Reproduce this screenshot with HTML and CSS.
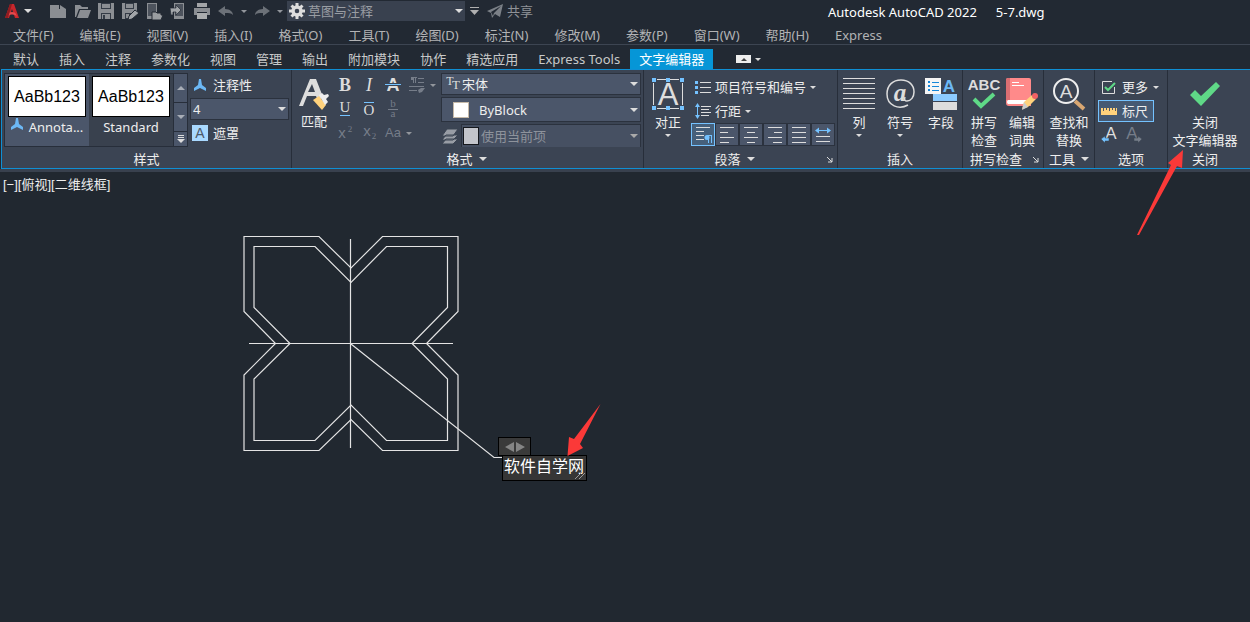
FILE: index.html
```html
<!DOCTYPE html>
<html lang="zh-CN">
<head>
<meta charset="utf-8">
<title>Autodesk AutoCAD 2022 5-7.dwg</title>
<link rel="stylesheet" href="styles.css">
</head>
<body>
<header class="titlebar">
  <button class="app-menu" aria-label="应用程序菜单">
    <svg width="16" height="18" viewBox="0 0 16 18"><path d="M1 16 6 2h4l5 14h-4l-3-9-3 9z" fill="#c8272c"/><path d="M4 11c4-2 7-1 8 1l1 3c-2-3-6-3-9-1z" fill="#e34a4d"/><path d="M1 16 6 2h2L4 16z" fill="#8f1c20"/></svg>
    <i class="caret light"></i>
  </button>
  <div class="quick">
    <button aria-label="新建"><svg width="18" height="18"><path d="M1 3h9v4h7v9H1zM11 3l6 4h-6z" fill="#8b8e93"/></svg></button>
    <button aria-label="打开"><svg width="18" height="18"><path d="M2 15V3h5l2 2h6v2H6L3 15zM7 8h11l-3 8H4z" fill="#8b8e93"/></svg></button>
    <button aria-label="保存"><svg width="18" height="18"><path d="M1 1h16v16H1z" fill="#8b8e93"/><path d="M4 1h10v6H4zM4 11h10v6H4z" fill="#343b46"/><path d="M5 2h8v4H5zM5 12h8v5H5z" fill="#8b8e93"/><path d="M6 13h2v4H6z" fill="#343b46"/></svg></button>
    <button aria-label="另存为"><svg width="18" height="18"><path d="M1 1h15v8l-8 8H1z" fill="#8b8e93"/><path d="M4 1h9v6H4zM4 11h8v2l-4 4H4z" fill="#343b46"/><path d="M5 2h7v4H5zM5 12h3v4H5z" fill="#8b8e93"/><path d="m7 18 1-4 6-6 4 3-7 6z" fill="#a2a5a9" stroke="#222933"/></svg></button>
    <button aria-label="从移动设备打开"><svg width="18" height="18"><path d="M2 1h10v16H2z" fill="#8b8e93"/><path d="M3 2h8v12H3z" fill="#4d535d"/><path d="M7 17v-7h4l1 1h4v2h2l-2 5H7z" fill="#9a9da1" stroke="#222933"/></svg></button>
    <button aria-label="保存到移动设备"><svg width="18" height="18"><path d="M5 1h10v16H5V9H3V6h2z" fill="#8b8e93"/><path d="M6 2h8v12H6z" fill="#4d535d"/><path d="M1 6h6V3l5 5-5 5v-3H4v3H2z" fill="#a2a5a9" stroke="#222933" stroke-width=".7"/></svg></button>
    <button aria-label="打印"><svg width="18" height="18"><path d="M4 1h10v4H4z" fill="#a3a5a8"/><path d="M1 6h16v7h-3v-3H4v3H1z" fill="#8b8e93"/><path d="M4 11h10v6H4z" fill="#aaacae"/></svg></button>
    <button aria-label="放弃"><svg width="18" height="18"><path d="m1 9 7-5v3c5 0 8 3 8 6-2-2-4-2-8-2v3z" fill="#6c7178"/></svg></button>
    <i class="caret dim"></i>
    <button aria-label="重做"><svg width="18" height="18"><path d="m17 9-7-5v3c-5 0-8 3-8 6 2-2 4-2 8-2v3z" fill="#6c7178"/></svg></button>
    <i class="caret dim"></i>
  </div>
  <div class="combo workspace">
    <svg width="16" height="16" viewBox="-8 -8 16 16"><circle r="4" fill="none" stroke="#ddd" stroke-width="3.4"/><path d="M0-8V-4M0 8V4M-8 0h4M8 0H4M-5.500-5.500l3 3M5.500 5.500l-3-3M-5.500 5.500l3-3M5.500-5.500l-3 3" stroke="#ddd" stroke-width="3"/></svg>
    <select aria-label="工作空间"><option>草图与注释</option></select>
  </div>
  <button class="customize" aria-label="自定义快速访问工具栏"><svg width="10" height="8"><path d="M0 .5h9" stroke="#b0b0b0"/><path d="M0 3h9L4.500 8z" fill="#b0b0b0"/></svg></button>
  <button class="share"><svg width="16" height="16"><path d="M0 8 16 1l-3 13-5-3-3 4-1-5zM4 9l2 4 1-3 7-7z" fill="#7b8087" fill-rule="evenodd"/></svg>共享</button>
  <h1 class="doc-title"><span>Autodesk AutoCAD 2022</span><span>5-7.dwg</span></h1>
</header>
<nav class="menubar" aria-label="菜单栏">
  <a href="#">文件(F)</a><a href="#">编辑(E)</a><a href="#">视图(V)</a><a href="#">插入(I)</a><a href="#">格式(O)</a><a href="#">工具(T)</a><a href="#">绘图(D)</a><a href="#">标注(N)</a><a href="#">修改(M)</a><a href="#">参数(P)</a><a href="#">窗口(W)</a><a href="#">帮助(H)</a><a href="#">Express</a>
</nav>
<nav class="tabs" aria-label="功能区选项卡">
  <a href="#">默认</a><a href="#">插入</a><a href="#">注释</a><a href="#">参数化</a><a href="#">视图</a><a href="#">管理</a><a href="#">输出</a><a href="#">附加模块</a><a href="#">协作</a><a href="#">精选应用</a><a href="#">Express Tools</a><a href="#" class="active">文字编辑器</a>
  <button class="minimize" aria-label="最小化功能区"><span class="min-box"><i class="caret up"></i></span><i class="caret small"></i></button>
</nav>
<main class="ribbon">
  <section class="panel style-panel">
    <div class="body">
      <div class="gallery">
        <button class="style-item selected"><span class="preview">AaBb123</span><span class="style-name"><svg width="12" height="12" viewBox="0 0 12 12"><path d="M5 0h2l1 6 4 3v3L6 9l-6 3V9l4-3z" fill="#6cb8f5"/></svg>Annota...</span></button>
        <button class="style-item"><span class="preview">AaBb123</span><span class="style-name">Standard</span></button>
        <div class="scroller">
          <button aria-label="上一行"><i class="caret up grey"></i></button>
          <button aria-label="下一行"><i class="caret grey"></i></button>
          <button aria-label="展开"><svg width="8" height="8"><path d="M1 .5h6M1 2.500h6" stroke="#ddd"/><path d="M0 4h8L4 8z" fill="#ddd"/></svg></button>
        </div>
      </div>
      <div class="style-options">
        <button class="row-btn"><svg width="16" height="16" viewBox="-2 -2 16 16"><path d="M5 0h2l1 6 4 3v3L6 9l-6 3V9l4-3z" fill="#6cb8f5"/></svg>注释性</button>
        <div class="combo height"><select aria-label="文字高度"><option>4</option></select></div>
        <button class="row-btn"><svg width="16" height="16"><path d="M0 0h16v16H0z" fill="#a9d9ff"/><text x="8" y="13" text-anchor="middle" font-size="14" fill="#4d5868">A</text></svg>遮罩</button>
      </div>
    </div>
    <h2>样式</h2>
  </section>

  <section class="panel format-panel">
    <div class="body">
      <button class="big match"><svg width="32" height="32"><path d="M1 28 12 1h6l7 18-5 4-2-5H9L5 28zM10 14h7l-3-8z" fill="#ddd" fill-rule="evenodd"/><path d="m15 22 6-4 7 9-4 5z" fill="#ffd27c"/><path d="m21 17 3-2 2 2 4-1 1 2-3 3 2 3-3 3z" fill="#eee"/></svg><span>匹配</span></button>
      <div class="glyphs">
        <button aria-label="粗体"><svg width="20" height="20"><text class="serif" x="10" y="16" font-size="18" font-weight="700">B</text></svg></button>
        <button aria-label="斜体"><svg width="20" height="20"><text class="serif" x="10" y="16" font-size="18" font-style="italic">I</text></svg></button>
        <button aria-label="删除线"><svg width="20" height="20"><text class="sans" x="10" y="16" font-size="18" font-weight="700">A</text><path d="M2 9.500h16" stroke="#3b4453" stroke-width="3"/><path d="M2 9.500h16" stroke="#74c2ff"/></svg></button>
        <button aria-label="段落格式" class="with-caret"><svg width="20" height="20"><path d="M6.500 2v6M8.500 2v6M6 2.500h4M11 3.500h6M11 7.500h6M2 11.500h15M2 15.500h8" fill="none" stroke="#767d89"/><path d="M4 2h3v3H4zM11 15l3-2h4l-3 4-3 1z" fill="#767d89"/></svg><i class="caret dim"></i></button>
        <button aria-label="下划线"><svg width="20" height="20"><text class="serif" x="10" y="13" font-size="15">U</text><path d="M5 16.500h10" stroke="#74c2ff"/></svg></button>
        <button aria-label="上划线"><svg width="20" height="20"><text class="serif" x="10" y="16" font-size="15">O</text><path d="M5 3.500h10" stroke="#74c2ff"/></svg></button>
        <button aria-label="堆叠"><svg width="20" height="20"><text class="serif off" x="10" y="8" font-size="11">b</text><text class="serif off" x="10" y="18" font-size="11">a</text><path d="M5 10.500h10" stroke="#767d89"/></svg></button>
        <span></span>
        <button aria-label="上标" disabled><svg width="20" height="20"><text class="sans off" x="7" y="15" font-size="15">x</text><text class="serif off" x="15" y="9" font-size="9">2</text></svg></button>
        <button aria-label="下标" disabled><svg width="20" height="20"><text class="sans off" x="8" y="13" font-size="15">x</text><text class="serif off" x="15" y="16" font-size="9">2</text></svg></button>
        <button aria-label="更改大小写" class="with-caret" disabled><svg width="20" height="20"><text class="sans off" x="10" y="14" font-size="13">Aa</text></svg><i class="caret dim"></i></button>
      </div>
      <div class="combos">
        <div class="combo"><svg width="16" height="20"><text class="serif" x="5" y="11" font-size="12">T</text><text class="serif" x="11" y="15" font-size="13">T</text></svg><select aria-label="字体"><option>宋体</option></select></div>
        <div class="combo color"><span class="swatch"></span><select aria-label="颜色"><option>ByBlock</option></select></div>
        <div class="layer-row"><svg width="18" height="18"><g fill="#989da5" stroke="#3b4453"><path d="m1 17 4-5h12l-5 5zM1 13l4-5h12l-5 5zM1 9l5-7h11l-5 7z"/></g></svg><div class="combo layer"><span class="swatch grey"></span><select aria-label="图层" disabled><option>使用当前项</option></select></div></div>
      </div>
    </div>
    <h2>格式<i class="caret"></i></h2>
  </section>

  <section class="panel para-panel">
    <div class="body">
      <button class="big"><svg width="32" height="32"><path d="M5 1.500h22M5 30.500h22M1.500 5v22M30.500 5v22" stroke="#ddd"/><text class="sans" x="16" y="27" font-size="31">A</text><path d="M0 0h4v4H0zM14 0h4v4h-4zM28 0h4v4h-4zM0 28h4v4H0zM14 28h4v4h-4zM28 28h4v4h-4z" fill="#74c2ff"/></svg><span>对正</span><i class="caret small"></i></button>
      <div class="para-tools">
        <button class="row-btn"><svg width="16" height="16"><path d="M5 3.500h11M5 8.500h11M5 13.500h11" stroke="#ddd"/><path d="M0 2h3v3H0zM0 7h3v3H0zM0 12h3v3H0z" fill="#74c2ff"/></svg>项目符号和编号<i class="caret small"></i></button>
        <button class="row-btn"><svg width="16" height="16"><path d="M6 3.500h10M6 6.500h8M6 9.500h10M6 12.500h8" stroke="#ddd"/><path d="M2.500 2v12" stroke="#74c2ff"/><path d="m0 4 2.500-4L5 4zM0 12l2.500 4L5 12z" fill="#74c2ff"/></svg>行距<i class="caret small"></i></button>
        <div class="align-row">
          <button class="on" aria-label="默认"><svg width="18" height="18"><path d="M2 1.500h14M2 5.500h8M2 9.500h8M2 13.500h8" stroke="#ddd"/><path d="M14.500 9v8M17.500 9v8M13 9.500h5" stroke="#74c2ff" fill="none"/><circle cx="13" cy="11.500" r="2.500" fill="#74c2ff"/></svg></button>
          <button aria-label="左对齐"><svg width="18" height="18"><path d="M2 1.500h14M2 6.500h8M2 11.500h14M2 16.500h9" stroke="#ddd"/></svg></button>
          <button aria-label="居中"><svg width="18" height="18"><path d="M2 1.500h14M5 6.500h8M2 11.500h14M5 16.500h8" stroke="#ddd"/></svg></button>
          <button aria-label="右对齐"><svg width="18" height="18"><path d="M2 1.500h14M8 6.500h8M2 11.500h14M7 16.500h9" stroke="#ddd"/></svg></button>
          <button aria-label="两端对齐"><svg width="18" height="18"><path d="M2 1.500h14M2 6.500h14M2 11.500h14M2 16.500h14" stroke="#ddd"/></svg></button>
          <button aria-label="分散对齐"><svg width="18" height="18"><path d="M2 10.500h14M2 15.500h14" stroke="#ddd"/><path d="M3 4.500h12" stroke="#74c2ff"/><path d="m1 4.500 4-3v6zM17 4.500l-4-3v6z" fill="#74c2ff"/></svg></button>
        </div>
      </div>
    </div>
    <h2>段落<i class="caret"></i><button class="launcher" aria-label="段落设置"><svg width="6" height="6"><path d="m0 0 5 5M5 1v4H1" stroke="#ddd" fill="none"/></svg></button></h2>
  </section>

  <section class="panel insert-panel">
    <div class="body">
      <button class="big"><svg width="32" height="32"><path d="M0 .5h32M0 5.500h32M0 10.500h32M0 15.500h32M0 20.500h32M0 25.500h32M0 30.500h32" stroke="#ddd"/></svg><span>列</span><i class="caret small"></i></button>
      <button class="big"><svg width="32" height="32"><path d="M24 27C15 32 3 28 3 16 3 7 9 2 17 2c8 0 13 5 13 12 0 5-3 9-7 9-2 0-3-1-2-4" fill="none" stroke="#ddd" stroke-width="1.500"/><text class="serif" x="16" y="23" font-size="25" font-weight="700" font-style="italic">a</text></svg><span>符号</span><i class="caret small"></i></button>
      <button class="big"><svg width="32" height="32"><path d="M0 0h16v16H0z" fill="#f5f5f5"/><path d="M7 4.500h7M7 8.500h7M7 12.500h7" stroke="#1687d9"/><path d="M3 3h2v2H3zM3 7h2v2H3zM3 11h2v2H3z" fill="#1687d9"/><text x="24" y="14" text-anchor="middle" font-size="17" font-weight="700" fill="#6cb8f5">A</text><path d="M8 16h24v7H8z" fill="#8ccbff"/><path d="M8 24h24v8H8z" fill="#ddd"/></svg><span>字段</span></button>
    </div>
    <h2>插入</h2>
  </section>

  <section class="panel spell-panel">
    <div class="body">
      <button class="big"><svg width="32" height="32"><text class="sans" x="16" y="12" font-size="15" font-weight="700">ABC</text><path d="m6 21 7 7 13-12" fill="none" stroke="#5fd987" stroke-width="4"/></svg><span>拼写<br>检查</span></button>
      <button class="big"><svg width="32" height="32"><path d="M2 0h21q2 0 2 2v26H3q-3 0-3-3V2q0-2 2-2z" fill="#ff8a8a"/><path d="M0 2q0-2 2-2h2v22H0z" fill="#d96e72"/><path d="M2 22h22v4H2q-2-2 0-4z" fill="#fff"/><path d="M6 4.500h7M6 7.500h12" stroke="#fff"/><path d="m16 31 2-7 8-7 4 4-8 8z" fill="#ffd27c"/><path d="m16 32 2-8 4 5z" fill="#ccc"/><circle cx="29" cy="18" r="3" fill="#f26265"/></svg><span>编辑<br>词典</span></button>
    </div>
    <h2>拼写检查<button class="launcher" aria-label="拼写检查设置"><svg width="6" height="6"><path d="m0 0 5 5M5 1v4H1" stroke="#ddd" fill="none"/></svg></button></h2>
  </section>

  <section class="panel tool-panel">
    <div class="body">
      <button class="big"><svg width="32" height="32"><path d="m22 23 9 8" stroke="#d9a772" stroke-width="4"/><circle cx="13" cy="13" r="12" fill="none" stroke="#eee" stroke-width="2"/><text class="sans" x="13" y="20" font-size="19">A</text></svg><span>查找和<br>替换</span></button>
    </div>
    <h2>工具<i class="caret"></i></h2>
  </section>

  <section class="panel option-panel">
    <div class="body">
      <button class="row-btn"><svg width="16" height="16"><path d="M13.500 8v6.500H1.500v-12H11" fill="none" stroke="#ddd"/><path d="m4 8 3 3 7-7" fill="none" stroke="#5fd987" stroke-width="2"/></svg>更多<i class="caret small"></i></button>
      <button class="row-btn ruler"><svg width="16" height="16"><path d="M0 5h16v7H0z" fill="#ffd27c"/><path d="M2.500 5v3M5.500 5v2M8.500 5v3M11.500 5v2M14.500 5v3" stroke="#4d5868"/></svg>标尺</button>
      <div class="undo-row">
        <button aria-label="放弃"><svg width="18" height="18"><text class="sans" x="10" y="13" font-size="17">A</text><path d="m0 13 4-3v2h4v3H4v2z" fill="#74c2ff" stroke="#3b4453" stroke-width=".5"/></svg></button>
        <button aria-label="重做" disabled><svg width="18" height="18"><text class="sans off" x="7" y="13" font-size="17">A</text><path d="m17 13-4-3v2H9v3h4v2z" fill="#767d89" stroke="#3b4453" stroke-width=".5"/></svg></button>
      </div>
    </div>
    <h2>选项</h2>
  </section>

  <section class="panel close-panel">
    <div class="body">
      <button class="big"><svg width="32" height="32"><path d="m1 17 5-5 6 6L27 4l4 4-19 20z" fill="#5fd987"/></svg><span>关闭<br>文字编辑器</span></button>
    </div>
    <h2>关闭</h2>
  </section>
</main>
<section class="canvas">
  <p class="view-label">[−][俯视][二维线框]</p>
  <svg class="drawing" width="620" height="330" viewBox="0 172 620 330" fill="none" stroke="#e4e4e4" stroke-width="1.200">
    <path d="M244 236.500h75l32 31.500 31.500-31.500h75.500v75l-31.500 32 31.500 31.500v75.500h-75.500L351 419.500l-32 31h-75V375l31.500-31.500-31.500-32z"/>
    <path d="M254 246.500h61l36 36 35.500-36h61v61l-35.500 36 35.500 35.500v61.500h-61L351 405l-36 35.500h-61V379l36-35.500-36-36z"/>
    <path d="M350.500 239v209M249 343.500h204M351 344l143 113.500h9"/>
  </svg>
  <div class="mtext-ruler"><svg width="20" height="12"><path d="m0 6 9-5v10zM20 6l-9-5v10z" fill="#858585"/></svg></div>
  <div class="mtext"><input type="text" value="软件自学网" aria-label="多行文字"><svg class="grip" width="10" height="8"><path d="m0 8 7-7M4 8l6-6" stroke="#999"/></svg></div>
</section>
<svg class="pointer pointer-close" width="48" height="88" viewBox="1136 149 48 88"><path d="m1183 150-15 13 3 2-34 70h2l38-69 5 2z" fill="#fb3938"/></svg>
<svg class="pointer pointer-text" width="36" height="56" viewBox="566 402 36 56"><path d="m567.500 456 1.500-19 5 2 26.500-35L580 444l3 4z" fill="#fb3938"/></svg>
</body>
</html>
```

FILE: styles.css
```css
* { box-sizing: border-box; }
body {
  position: relative;
  display: flex;
  flex-direction: column;
  min-height: 100vh;
  margin: 0;
  background: #212830;
  color: #eee;
  font: 13px/18px "Noto Sans", "Noto Sans CJK SC", sans-serif;
  white-space: nowrap;
  overflow: hidden;
}
button, select, input { font: inherit; color: inherit; background: none; border: 0; padding: 0; margin: 0; }
a { color: inherit; text-decoration: none; }
svg { display: block; flex: none; overflow: visible; }
text { font-family: "Liberation Sans", sans-serif; }
text.serif, text.sans { text-anchor: middle; fill: #ddd; }
text.serif { font-family: "Liberation Serif", serif; }
text.off { fill: #767d89; }

.caret { width: 0; height: 0; flex: none; border: 4px solid transparent; border-top-color: #ddd; border-bottom: 0; }
.caret.small { border-width: 3px; border-bottom: 0; }
.caret.dim { border-width: 3px; border-bottom: 0; border-top-color: #92969c; }
.caret.grey { border-top-color: #a8adb6; }
.caret.up { border-top: 0; border-bottom: 4px solid #a8adb6; }

.titlebar { display: flex; align-items: center; height: 22px; background: #222933; }
.app-menu { display: flex; align-items: center; gap: 4px; padding-left: 4px; }
.quick { display: flex; align-items: center; gap: 6px; padding-left: 17px; }
.combo { position: relative; display: flex; align-items: center; background: #4b566a; border: 1px solid #2b323e; }
.combo select { appearance: none; flex: 1; min-width: 0; height: 100%; outline: 0; opacity: 1; }
.combo::after { content: ""; position: absolute; right: 2px; top: 50%; margin-top: -2px; border: 4px solid transparent; border-top-color: #ddd; border-bottom: 0; pointer-events: none; }
.workspace { width: 178px; height: 20px; margin-left: 4px; padding-left: 2px; gap: 3px; border: 0; background: #39414f; color: #999da3; }
.customize { display: flex; margin-left: 5px; }
.share { display: flex; align-items: center; gap: 4px; margin-left: 7px; color: #8f9297; }
.doc-title { display: flex; gap: 19px; margin: 0; padding: 2px 0 0 295px; font-size: 13px; font-weight: 400; color: #fff; }

.menubar { display: flex; gap: 26px; height: 23px; padding-left: 13px; line-height: 26px; border-bottom: 1px solid #3d4552; background: #222933; color: #b2b3b5; }
.tabs { display: flex; align-items: flex-end; height: 24px; padding-left: 3px; background: #222933; color: #c8c9ca; }
.tabs a { padding: 0 10px; line-height: 20px; }
.tabs .active { padding: 0 9px; background: #0696d7; color: #fff; }
.minimize { display: flex; align-items: center; gap: 4px; height: 20px; padding-left: 23px; }
.min-box { display: flex; align-items: center; justify-content: center; width: 15px; height: 8px; background: #eee; }
.min-box .caret { border-width: 3px; border-top: 0; border-bottom-color: #444; }

.ribbon { display: flex; margin-left: 1px; border: 1px solid #0f8fd4; border-right: 0; background: #3b4453; }
.panel { flex: none; min-width: 0; border-right: 1px solid #272e3a; }
.panel .body { display: flex; height: 77px; overflow: hidden; }
.panel h2 { position: relative; display: flex; align-items: center; justify-content: center; gap: 6px; height: 21px; margin: 0; font-size: 13px; font-weight: 400; line-height: 18px; padding-top: 3px; }
.launcher { position: absolute; right: 4px; bottom: 5px; }
.big { display: flex; flex-direction: column; align-items: center; padding-top: 8px; align-self: flex-start; }
.big span { margin-top: 3px; text-align: center; }
.big .caret { margin-top: 3px; }
.row-btn { display: flex; align-items: center; gap: 5px; height: 24px; padding-left: 3px; }

.style-panel { width: 290px; }
.style-panel .body { gap: 2px; padding: 3px 2px 0; }
.gallery { display: flex; width: 184px; border: 1px solid #272e3a; background: #39414e; }
.style-item { display: flex; flex-direction: column; align-items: center; width: 84px; padding-top: 2px; }
.style-item.selected { background: #4b566a; }
.preview { width: 78px; height: 41px; border: 1px solid #000; background: #fff; color: #000; font: 16px/40px "Liberation Sans", sans-serif; }
.style-name { display: flex; gap: 6px; padding-top: 1px; }
.scroller { display: grid; grid-template-rows: 28px 28px 1fr; gap: 1px; flex: 1; background: #272e3a; padding-left: 1px; }
.scroller button { display: flex; align-items: center; justify-content: center; background: #4b566a; }
.style-options { display: grid; grid-template-rows: 24px 24px 24px; flex: 1; }
.style-options .row-btn { padding-left: 2px; }
.height { margin: 1px 0; padding-left: 2px; }

.format-panel { width: 352px; }
.format-panel .body { padding: 0 2px 0 6px; }
.format-panel h2 { padding-right: 2px; }
.match span { margin-top: 2px; }
.glyphs { display: grid; grid-template-columns: repeat(4, 24px); grid-template-rows: repeat(3, 24px); padding: 3px 0 0 3px; }
.glyphs button { display: flex; align-items: center; justify-content: center; }
.glyphs .with-caret { justify-content: flex-start; gap: 3px; padding-left: 2px; }
.combos { display: grid; grid-template-rows: 22px 25px 24px; gap: 2px; flex: 1; padding: 3px 0 0 12px; }
.combos .combo { padding-left: 3px; gap: 1px; }
.combos .color { padding-left: 11px; gap: 10px; }
.swatch { flex: none; width: 16px; height: 16px; border: 1px solid #c5b9a8; background: #fff; }
.combos .swatch.grey { height: 18px; background: #c3c5cb; border-color: #15181d; }
.layer-row { display: flex; align-items: center; gap: 2px; }
.combos .layer { flex: 1; height: 24px; padding-left: 1px; gap: 2px; background: #465062; color: #8e939c; }
.layer::after { border-top-color: #aaa; }

.para-panel { width: 194px; }
.para-panel .body { padding: 0 2px 0 8px; gap: 7px; }
.para-tools { padding-top: 5px; }
.para-tools .row-btn { padding-left: 4px; gap: 4px; }
.align-row { display: grid; grid-template-columns: repeat(6, 24px); height: 23px; }
.align-row button { display: flex; align-items: center; justify-content: center; background: #4b566a; border: 1px solid #2b323e; }
.align-row .on { border-color: #74c2ff; background: #46607b; }
.para-panel h2 { padding-right: 12px; }

.insert-panel { width: 125px; }
.insert-panel .body { gap: 9px; padding-left: 5px; }
.spell-panel { width: 81px; }
.spell-panel .body { gap: 6px; padding-left: 5px; }
.spell-panel h2 { padding-right: 14px; }
.tool-panel { width: 51px; }
.tool-panel .body { justify-content: center; }
.option-panel { width: 73px; }
.option-panel .body { flex-direction: column; align-items: flex-start; padding: 5px 3px 0; }
.ruler { width: 56px; height: 22px; border: 1px solid #74c2ff; background: #465a73; padding-left: 2px; margin: 1px 0; }
.undo-row { display: flex; gap: 6px; padding: 3px 3px 0; }
.close-panel { flex: 1; border-right: 0; padding-right: 8px; }
.close-panel .body { justify-content: center; }

.canvas { position: relative; flex: 1; border-top: 3px solid #39414e; }
.view-label { margin: 0; padding: 4px 3px; font-family: "Liberation Sans", "Noto Sans CJK SC", sans-serif; }
.drawing { position: absolute; left: 0; top: 0; }
.mtext-ruler { position: absolute; left: 498px; top: 265px; display: flex; align-items: center; justify-content: center; width: 33px; height: 19px; background: #3a3a3a; border: 1px solid #000; }
.mtext { position: absolute; left: 502px; top: 283px; width: 85px; height: 26px; background: #363636; border: 1px solid #000; }
.mtext input { display: block; width: 100%; height: 20px; padding-left: 1px; font-size: 16px; line-height: 20px; color: #fff; outline: 0; }
.grip { position: absolute; right: 1px; bottom: 1px; }
.pointer { position: absolute; pointer-events: none; }
.pointer-close { left: 1136px; top: 149px; }
.pointer-text { left: 566px; top: 402px; }
```
